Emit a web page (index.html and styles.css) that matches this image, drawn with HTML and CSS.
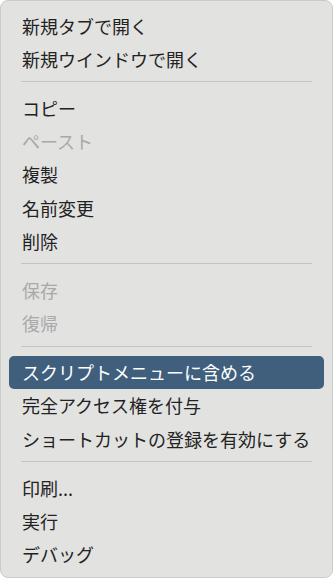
FILE: index.html
```html
<!DOCTYPE html>
<html lang="ja">
<head>
<meta charset="utf-8">
<link rel="stylesheet" href="styles.css">
</head>
<body>
<div class="menu">
  <div class="item">新規タブで開く</div>
  <div class="item">新規ウインドウで開く</div>
  <div class="sep"></div>
  <div class="item">コピー</div>
  <div class="item disabled">ペースト</div>
  <div class="item">複製</div>
  <div class="item">名前変更</div>
  <div class="item">削除</div>
  <div class="sep"></div>
  <div class="item disabled">保存</div>
  <div class="item disabled">復帰</div>
  <div class="sep"></div>
  <div class="item active">スクリプトメニューに含める</div>
  <div class="item">完全アクセス権を付与</div>
  <div class="item">ショートカットの登録を有効にする</div>
  <div class="sep"></div>
  <div class="item">印刷...</div>
  <div class="item">実行</div>
  <div class="item">デバッグ</div>
</div>
</body>
</html>
```
FILE: styles.css
```css
html, body {
  margin: 0;
  padding: 0;
  background: #ffffff;
}
body {
  font-family: "Noto Sans CJK JP", "Noto Sans", sans-serif;
}
.menu {
  box-sizing: border-box;
  width: 333px;
  height: 578px;
  background: #e2e2e1;
  border: 1px solid #cbcbcb;
  border-radius: 8px;
  padding: 8px 0 5px;
  display: flex;
  flex-direction: column;
}
.item {
  height: 33.2px;
  flex: none;
  margin: 0 8px;
  padding-left: 13px;
  display: flex;
  align-items: center;
  font-size: 18px;
  color: #222222;
  border-radius: 5px;
  white-space: nowrap;
}
.item.disabled {
  color: #a9a9a9;
}
.item.active {
  background: #3f5f7d;
  color: #ffffff;
}
.sep {
  flex: none;
  height: 16px;
  box-sizing: border-box;
  padding-top: 6px;
  margin: 0 20px 0 20px;
}
.sep::before {
  content: "";
  display: block;
  height: 1px;
  background: #c4c4c4;
}
```
